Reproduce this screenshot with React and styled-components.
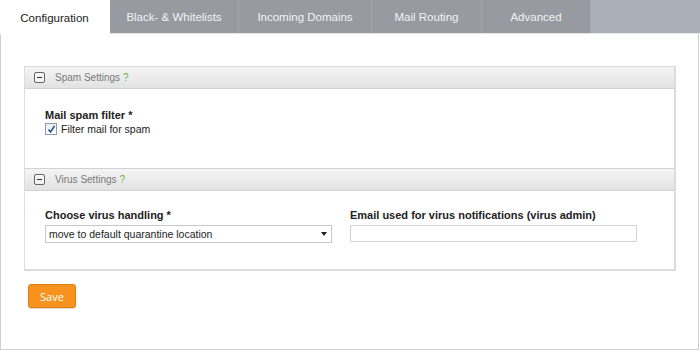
import React from "react";
import styled, { createGlobalStyle } from "styled-components";

const Global = createGlobalStyle`
  body {
    margin: 0;
    background: #fff;
    font-family: "Liberation Sans", Arial, sans-serif;
  }
`;

const Frame = styled.div`
  width: 700px;
  height: 350px;
  box-sizing: border-box;
  display: flex;
  flex-direction: column;
`;

const TabBar = styled.div`
  display: flex;
  height: 34px;
  background: #abafb7;
  border-bottom: 1px solid #e4e5e8;
  box-sizing: border-box;
`;

const Tab = styled.div`
  width: ${(p) => p.w}px;
  display: flex;
  align-items: center;
  justify-content: center;
  padding-top: 1px;
  font-size: 11.5px;
  color: ${(p) => (p.active ? "#222" : "#f2f3f5")};
  background: ${(p) => (p.active ? "#fff" : "#979aa1")};
  border-right: 1px solid ${(p) => (p.active ? "transparent" : "#a4a7ad")};
  margin-bottom: ${(p) => (p.active ? "-1px" : "0")};
  box-sizing: border-box;
`;

const Content = styled.div`
  flex: 1;
  border: 1px solid #d0d0d0;
  border-top: none;
  margin-right: 1px;
  padding: 32px 23px 0 23px;
  display: flex;
  flex-direction: column;
`;

const Panel = styled.div`
  border: 1px solid #dcdcdc;
  border-width: 1px 2px 2px 1px;
  width: 652px;
  box-sizing: border-box;
`;

const SectionHeader = styled.div`
  height: 21px;
  display: flex;
  align-items: center;
  padding-left: 9px;
  gap: 10px;
  background: linear-gradient(#f5f5f5, #e2e2e2);
  border-top: ${(p) => (p.first ? "none" : "1px solid #d2d2d2")};
  border-bottom: 1px solid #d2d2d2;
  font-size: 10px;
  color: #7a7a7a;
`;

const Toggle = styled.span`
  width: 9px;
  height: 9px;
  border: 1px solid #666;
  border-radius: 2px;
  background: #f4f4f4;
  position: relative;
  &::after {
    content: "";
    position: absolute;
    left: 2px;
    right: 2px;
    top: 4px;
    height: 1px;
    background: #333;
  }
`;

const Help = styled.span`
  color: #6fae3c;
  margin-left: 3px;
`;

const SectionBody = styled.div`
  height: ${(p) => p.h}px;
  padding: ${(p) => p.pt}px 20px 0 20px;
  box-sizing: border-box;
  display: flex;
  gap: 18px;
`;

const Field = styled.div`
  display: flex;
  flex-direction: column;
  width: ${(p) => p.w}px;
`;

const Label = styled.div`
  font-size: 11px;
  font-weight: bold;
  color: #222;
  margin-bottom: ${(p) => p.mb}px;
`;

const CheckRow = styled.label`
  display: flex;
  align-items: center;
  gap: 4px;
  font-size: 10.5px;
  color: #222;
`;

const Box = styled.span`
  width: 10px;
  height: 10px;
  border: 1px solid #8a9bb3;
  background: linear-gradient(#e8edf4, #fff);
  display: flex;
  align-items: center;
  justify-content: center;
`;

const Select = styled.div`
  height: 16px;
  border: 1px solid #c8c8c8;
  display: flex;
  align-items: center;
  justify-content: space-between;
  padding: 0 4px 0 3px;
  font-size: 10.5px;
  color: #222;
`;

const Arrow = styled.span`
  width: 0;
  height: 0;
  border-left: 3.5px solid transparent;
  border-right: 3.5px solid transparent;
  border-top: 4px solid #222;
`;

const Input = styled.div`
  height: 15px;
  border: 1px solid #d0d0d0;
  border-radius: 1px;
`;

const SaveButton = styled.button`
  margin: 13px 0 0 4px;
  width: 48px;
  height: 24px;
  border: 1px solid #e07f10;
  border-radius: 3px;
  background: #f7921e;
  color: #fff;
  font-family: "Open Sans", sans-serif;
  font-size: 11px;
  box-shadow: 0 1px 1px rgba(0, 0, 0, 0.15);
  padding: 0;
`;

const tabs = [
  ["Configuration", 110],
  ["Black- & Whitelists", 129],
  ["Incoming Domains", 133],
  ["Mail Routing", 110],
  ["Advanced", 109],
];

export default function App() {
  return (
    <>
      <Global />
      <Frame>
        <TabBar>
          {tabs.map(([t, w], i) => (
            <Tab key={t} w={w} active={i === 0}>
              {t}
            </Tab>
          ))}
        </TabBar>
        <Content>
          <Panel>
            <SectionHeader first>
              <Toggle />
              <span>
                Spam Settings<Help>?</Help>
              </span>
            </SectionHeader>
            <SectionBody h={79} pt={20}>
              <Field w={300}>
                <Label mb={2}>Mail spam filter *</Label>
                <CheckRow>
                  <Box>
                    <svg width="9" height="9" viewBox="0 0 9 9">
                      <path d="M1.5 4.5 L3.5 7 L7.5 1" fill="none" stroke="#2a4d8a" strokeWidth="1.5" />
                    </svg>
                  </Box>
                  Filter mail for spam
                </CheckRow>
              </Field>
            </SectionBody>
            <SectionHeader>
              <Toggle />
              <span>
                Virus Settings<Help>?</Help>
              </span>
            </SectionHeader>
            <SectionBody h={78} pt={18}>
              <Field w={287}>
                <Label mb={4}>Choose virus handling *</Label>
                <Select>
                  move to default quarantine location
                  <Arrow />
                </Select>
              </Field>
              <Field w={287}>
                <Label mb={4}>Email used for virus notifications (virus admin)</Label>
                <Input />
              </Field>
            </SectionBody>
          </Panel>
          <div>
            <SaveButton>Save</SaveButton>
          </div>
        </Content>
      </Frame>
    </>
  );
}
